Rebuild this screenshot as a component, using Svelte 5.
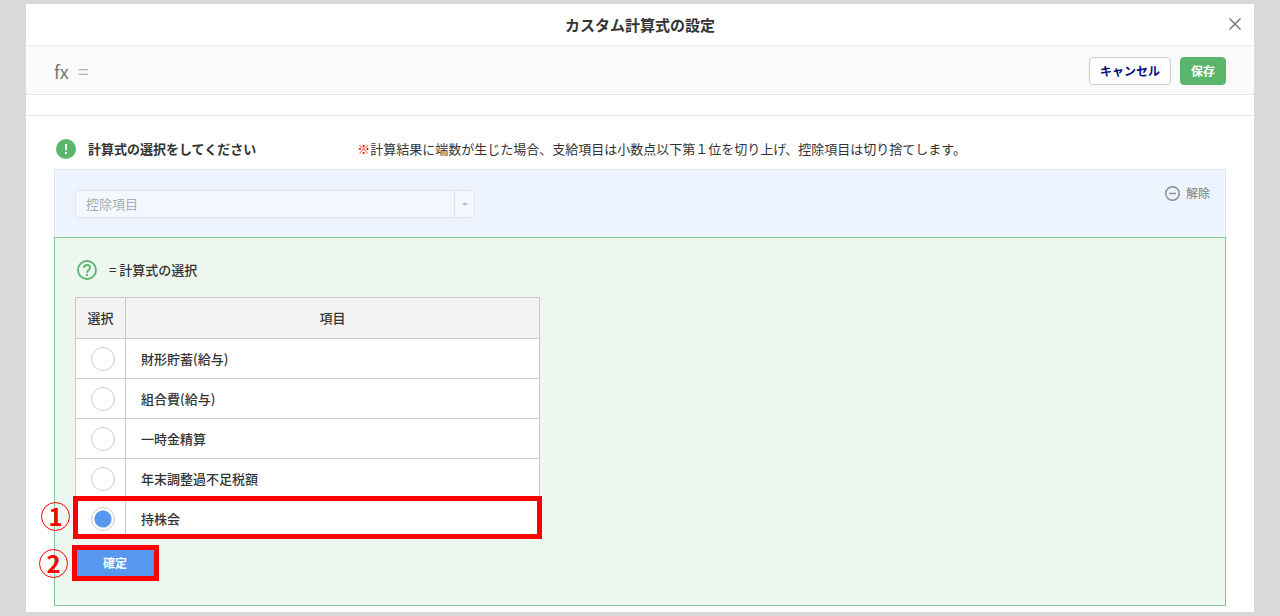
<script lang="ts">
  const items = ['財形貯蓄(給与)', '組合費(給与)', '一時金精算', '年末調整過不足税額', '持株会'];
  let selected = $state('持株会');
</script>

<div class="backdrop">
  <div class="dialog" role="dialog" aria-labelledby="dialog-title">
    <header class="title-bar">
      <h1 id="dialog-title">カスタム計算式の設定</h1>
      <button class="close" type="button" aria-label="閉じる">
        <svg width="12" height="12" viewBox="0 0 12 12" fill="none" stroke="#777" stroke-width="1.5">
          <path d="M0.5 0.5 L11.5 11.5 M11.5 0.5 L0.5 11.5" />
        </svg>
      </button>
    </header>

    <div class="formula-bar">
      <span class="fx">fx</span>
      <span class="eq">=</span>
      <div class="actions">
        <button class="cancel" type="button">キャンセル</button>
        <button class="save" type="button">保存</button>
      </div>
    </div>
    <div class="formula-sub"></div>

    <main>
      <div class="notice">
        <svg width="20" height="20" viewBox="0 0 20 20">
          <circle cx="10" cy="10" r="10" fill="#5bb56b" />
          <path d="M9 5 H11 L10.8 11.5 H9.2 Z M9 13 H11 V15 H9 Z" fill="#fff" />
        </svg>
        <h2>計算式の選択をしてください</h2>
        <p><span class="mark">※</span>計算結果に端数が生じた場合、支給項目は小数点以下第１位を切り上げ、控除項目は切り捨てします。</p>
      </div>

      <section class="source">
        <div class="select">
          <select aria-label="項目区分" disabled>
            <option>控除項目</option>
          </select>
          <span class="arrow">
            <svg width="6" height="3" viewBox="0 0 6 3"><path d="M0 0 H6 L3 3 Z" fill="#b4b8c0" /></svg>
          </span>
        </div>
        <button class="release" type="button">
          <svg width="15" height="15" viewBox="0 0 14 14" fill="none" stroke="#8c8f90" stroke-width="1.4">
            <circle cx="7" cy="7" r="6.3" />
            <path d="M3.8 7 H10.2" />
          </svg>
          解除
        </button>
      </section>

      <section class="chooser">
        <div class="question">
          <svg width="20" height="20" viewBox="0 0 20 20" fill="none" stroke="#5bb56b">
            <circle cx="10" cy="10" r="9" stroke-width="1.8" />
            <path d="M6.9 8 C6.9 6.1 8.2 5 10 5 C11.8 5 13.1 6.2 13.1 7.8 C13.1 9.9 10 10.2 10 12.7" stroke-width="1.8" />
            <path d="M9 14 H11 V15.9 H9 Z" fill="#5bb56b" stroke="none" />
          </svg>
          <h3>= 計算式の選択</h3>
        </div>

        <div class="table-wrap">
          <table>
            <thead>
              <tr>
                <th class="pick">選択</th>
                <th>項目</th>
              </tr>
            </thead>
            <tbody>
              {#each items as item, i}
                <tr>
                  <td class="pick">
                    <input type="radio" id="item-{i}" name="item" value={item} bind:group={selected} />
                  </td>
                  <td><label for="item-{i}">{item}</label></td>
                </tr>
              {/each}
            </tbody>
          </table>
          <div class="frame frame-row"></div>
          <span class="step step-one">1</span>
        </div>

        <div class="confirm-wrap">
          <button class="confirm" type="button">確定</button>
          <div class="frame frame-button"></div>
          <span class="step step-two">2</span>
        </div>
      </section>
    </main>
  </div>
</div>

<style>
  :global(body) {
    background: #d9d9d9;
  }

  .backdrop {
    padding: 4px 26px;
    font-family: 'Noto Sans CJK JP', sans-serif;
    font-size: 13px;
    line-height: 20px;
    color: #333;
  }

  .backdrop * {
    box-sizing: border-box;
  }

  .dialog {
    background: #fff;
    padding-bottom: 6px;
  }

  h1, h2, h3, p {
    margin: 0;
    font-size: 13px;
  }

  button {
    font: inherit;
    cursor: pointer;
  }

  .title-bar {
    position: relative;
    display: flex;
    align-items: center;
    justify-content: center;
    height: 42px;
    border-bottom: 1px solid #ebebeb;
  }

  h1 {
    font-size: 15px;
    font-weight: 700;
  }

  .close {
    position: absolute;
    top: 14px;
    right: 13px;
    display: flex;
    padding: 0;
    border: 0;
    background: none;
  }

  .formula-bar {
    display: flex;
    align-items: center;
    height: 49px;
    padding: 1px 28px 0;
    background: #fafafa;
    border-bottom: 1px solid #e6e6e6;
  }

  .fx {
    font-size: 18px;
    color: #777;
  }

  .eq {
    margin-left: 9px;
    font-size: 19px;
    color: #b4b4b4;
  }

  .actions {
    display: flex;
    gap: 9px;
    margin-left: auto;
  }

  .actions button {
    height: 28px;
    padding: 0 10px;
    border: 1px solid #ccc;
    border-radius: 4px;
    background: #fff;
    font-size: 12px;
    font-weight: 700;
    color: #0b0b7c;
  }

  .actions .save {
    border-color: #5bb56b;
    background: #5bb56b;
    color: #fff;
  }

  .formula-sub {
    height: 21px;
    border-bottom: 1px solid #e6e6e6;
  }

  main {
    padding: 0 28px;
  }

  .notice {
    display: flex;
    align-items: center;
    height: 53px;
    padding: 12px 2px 0;
  }

  h2 {
    margin-left: 12px;
    font-weight: 700;
  }

  .notice p {
    margin-left: 101px;
  }

  .mark {
    color: #f00;
  }

  .source {
    display: flex;
    align-items: flex-start;
    justify-content: space-between;
    height: 68px;
    padding: 13px 15px 0 20px;
    border: 1px solid #e1e5ea;
    border-bottom: 0;
    background: #edf4ff;
  }

  .select {
    display: flex;
    width: 400px;
    height: 28px;
    margin-top: 7px;
    border: 1px solid #dfe3ea;
    border-radius: 4px;
    background: #f4f7fe;
  }

  .select select {
    flex: 1;
    padding: 0 10px;
    border: 0;
    appearance: none;
    background: none;
    font: inherit;
    color: #aaadb2;
    opacity: 1;
  }

  .arrow {
    display: flex;
    align-items: center;
    justify-content: center;
    width: 20px;
    border-left: 1px solid #dfe3ea;
  }

  .release {
    display: flex;
    align-items: center;
    gap: 6px;
    padding: 0;
    border: 0;
    background: none;
    font-size: 12px;
    font-weight: 500;
    color: #8c8f90;
  }

  .chooser {
    padding: 22px 20px 26px;
    border: 1px solid #85c995;
    background: #edf7ef;
  }

  .question {
    display: flex;
    align-items: center;
    gap: 12px;
    padding-left: 2px;
    margin-bottom: 17px;
  }

  h3 {
    font-weight: 500;
  }

  .table-wrap {
    position: relative;
    max-width: 465px;
  }

  table {
    width: 100%;
    border-collapse: collapse;
    table-layout: fixed;
    background: #fff;
  }

  th,
  td {
    height: 40px;
    padding: 0 15px;
    border: 1px solid #c8c8c8;
    text-align: left;
    font-weight: 500;
  }

  th {
    height: 41px;
    background: #f3f3f3;
    text-align: center;
  }

  .pick {
    width: 50px;
    padding: 0;
    text-align: center;
  }

  td.pick {
    padding-left: 4px;
  }

  input[type='radio'] {
    display: block;
    width: 24px;
    height: 24px;
    margin: 0 auto;
    border: 1px solid #ccc;
    border-radius: 50%;
    appearance: none;
    background: #fff;
  }

  input[type='radio']:checked {
    background: radial-gradient(circle, #5897f0 8px, #fff 9px);
  }

  .frame {
    position: absolute;
    border: 5px solid #f00;
    pointer-events: none;
  }

  .frame-row {
    right: -2px;
    bottom: 0;
    left: -2px;
    height: 43px;
  }

  .step {
    position: absolute;
    width: 29px;
    height: 29px;
    border: 1px solid #f00;
    border-radius: 50%;
    text-align: center;
    font-size: 24px;
    font-weight: 700;
    line-height: 26px;
    color: #f00;
  }

  .step-one {
    bottom: 8px;
    left: -34px;
  }

  .confirm-wrap {
    position: relative;
    width: 80px;
    margin-top: 8px;
  }

  .confirm {
    display: block;
    width: 100%;
    height: 32px;
    padding: 0;
    border: 0;
    background: #5897f0;
    font-size: 12px;
    font-weight: 700;
    color: #fff;
  }

  .frame-button {
    inset: -2px -4px -2px -3px;
  }

  .step-two {
    top: 2px;
    left: -36px;
  }
</style>
